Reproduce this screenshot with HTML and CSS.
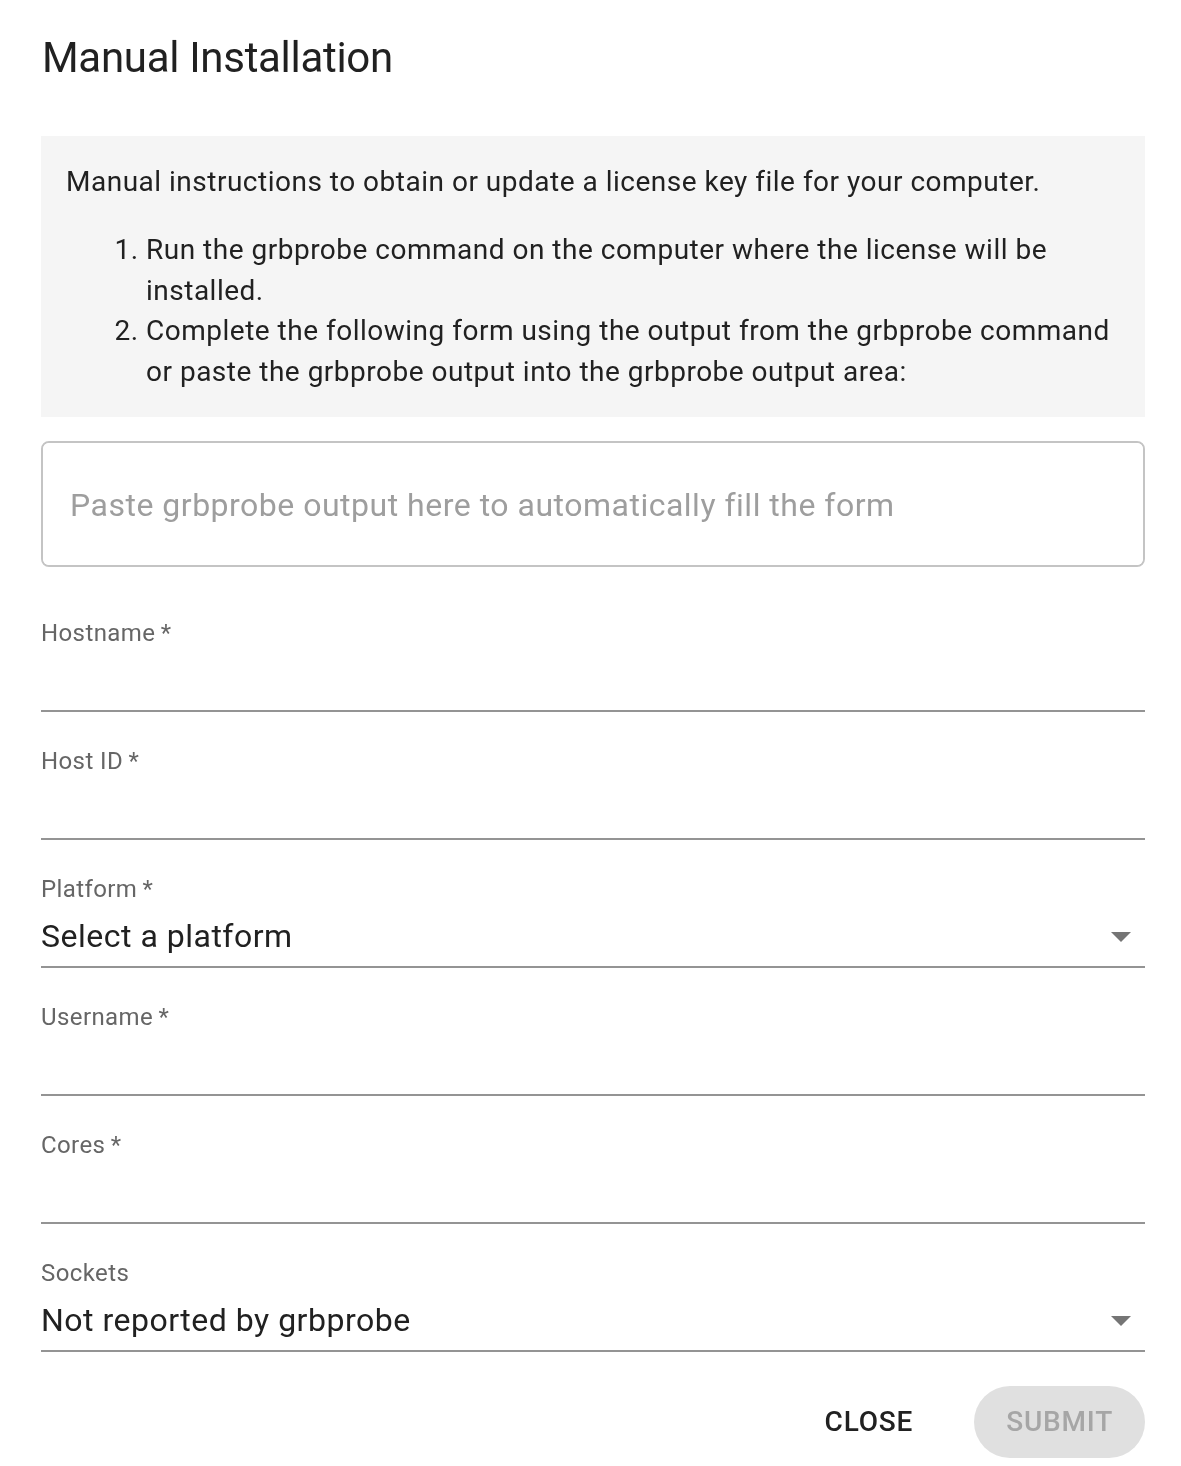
FILE: index.html
```html
<!DOCTYPE html>
<html lang="en">
<head>
  <meta charset="UTF-8" />
  <meta name="viewport" content="width=device-width, initial-scale=1.0"/>
  <title>Manual Installation</title>
  <link rel="stylesheet" href="styles.css">
</head>
<body>

  <div class="dialog">
    <h2 class="dialog-title">Manual Installation</h2>

    <!-- Instructions -->
    <div class="info">
      <p>Manual instructions to obtain or update a license key file for your computer.</p>
      <ol>
        <li>Run the grbprobe command on the computer where the license will be installed.</li>
        <li>Complete the following form using the output from the grbprobe command or paste the grbprobe output into the grbprobe output area:</li>
      </ol>
    </div>

    <textarea class="paste-area" placeholder="Paste grbprobe output here to automatically fill the form"></textarea>

    <!-- Form fields -->
    <form class="fields">
      <div class="field">
        <label>Hostname&thinsp;*</label>
        <div class="field-input"><input type="text" name="hostname"></div>
      </div>

      <div class="field">
        <label>Host ID&thinsp;*</label>
        <div class="field-input"><input type="text" name="hostid"></div>
      </div>

      <div class="field">
        <label>Platform&thinsp;*</label>
        <div class="field-input select">
          <span>Select a platform</span>
          <svg class="arrow" viewBox="0 0 24 24"><path d="M7 10l5 5 5-5z"/></svg>
        </div>
      </div>

      <div class="field">
        <label>Username&thinsp;*</label>
        <div class="field-input"><input type="text" name="username"></div>
      </div>

      <div class="field">
        <label>Cores&thinsp;*</label>
        <div class="field-input"><input type="text" name="cores"></div>
      </div>

      <div class="field">
        <label>Sockets</label>
        <div class="field-input select">
          <span>Not reported by grbprobe</span>
          <svg class="arrow" viewBox="0 0 24 24"><path d="M7 10l5 5 5-5z"/></svg>
        </div>
      </div>
    </form>

    <div class="actions">
      <button type="button" class="btn-text">Close</button>
      <button type="button" class="btn-submit" disabled>Submit</button>
    </div>
  </div>

</body>
</html>
```

FILE: styles.css
```css
body {
  margin: 0;
  font-family: Roboto, 'Liberation Sans', sans-serif;
  background-color: #fff;
  color: #212121;
}

.dialog {
  width: 1104px;
  padding: 30px 36px 8px 41px;
}

.dialog-title {
  margin: 0;
  font-size: 42px;
  line-height: 56px;
  font-weight: 400;
  letter-spacing: -0.3px;
  padding-left: 1px;
}

.info {
  margin-top: 50px;
  background: #f5f5f5;
  padding: 26px 24px 25px 25px;
  font-size: 28px;
  line-height: 40.5px;
  letter-spacing: 0.5px;
}

.info p {
  margin: 0;
}

.info ol {
  margin: 27.5px 0 0;
  padding-left: 80px;
}

.paste-area {
  display: block;
  width: 100%;
  height: 126px;
  box-sizing: border-box;
  margin-top: 24px;
  padding: 39px 27px;
  border: 2px solid #c4c4c4;
  border-radius: 8px;
  font-family: inherit;
  font-size: 32px;
  line-height: 46px;
  letter-spacing: 0.5px;
  color: #212121;
  resize: none;
  outline: none;
}

.paste-area::placeholder {
  color: #9e9e9e;
}

.fields {
  display: flex;
  flex-direction: column;
  gap: 32px;
  margin-top: 49px;
}

.field {
  position: relative;
}

.field label {
  display: block;
  font-size: 24px;
  line-height: 34px;
  letter-spacing: 0.4px;
  color: #666;
}

.field-input {
  margin-top: -2px;
  height: 64px;
  box-sizing: border-box;
  padding-top: 9px;
  border-bottom: 2px solid #949494;
  display: flex;
  align-items: flex-start;
}

.field-input input {
  width: 100%;
  border: none;
  outline: none;
  padding: 0;
  font-family: inherit;
  font-size: 32px;
  line-height: 46px;
  height: 46px;
  background: transparent;
}

.select span {
  flex: 1;
  font-size: 32px;
  line-height: 46px;
  letter-spacing: 0.5px;
  color: #212121;
}

.arrow {
  width: 48px;
  height: 48px;
  margin-top: -1px;
  fill: #757575;
}

.actions {
  display: flex;
  justify-content: flex-end;
  align-items: center;
  gap: 45px;
  margin-top: 34px;
}

.actions button {
  font-family: inherit;
  font-size: 28px;
  font-weight: 500;
  line-height: 48px;
  letter-spacing: 0.8px;
  text-transform: uppercase;
  border: none;
  cursor: pointer;
}

.btn-text {
  background: none;
  color: #212121;
  padding: 12px 16px;
}

.btn-submit {
  background: #e0e0e0;
  color: #a6a6a6;
  padding: 12px 32px;
  border-radius: 36px;
  cursor: default;
}
```
